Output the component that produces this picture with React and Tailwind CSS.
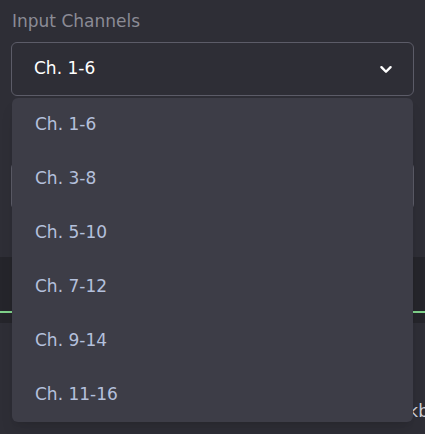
import React from "react";

const options = ["Ch. 1-6", "Ch. 3-8", "Ch. 5-10", "Ch. 7-12", "Ch. 9-14", "Ch. 11-16"];

function Chevron() {
    return (
        <svg width="22" height="22" viewBox="0 0 24 24" fill="none" stroke="#ffffff" strokeWidth="2.6" strokeLinecap="round" strokeLinejoin="round">
            <path d="M7 10l5 5 5-5" />
        </svg>
    );
}

export default function App() {
    return (
        <div
            className="relative h-[434px] w-[425px] overflow-hidden bg-[#2e2e36]"
            style={{ fontFamily: '"DejaVu Sans", "Open Sans", sans-serif' }}
        >
            {/* page behind the open menu */}
            <div className="px-[11px] pt-[10px]">
                <label className="block pl-px text-[17px] leading-[22px] text-[#8b8b95]">Input Channels</label>
                <div className="mt-[10px] flex h-[54px] items-center justify-between rounded-md border border-[#5c5c68] pl-[22px] pr-[16px]">
                    <span className="text-[17px] text-white">Ch. 1-6</span>
                    <Chevron />
                </div>
                <div className="mt-[66px] h-[48px] rounded-md border border-[#5c5c68]" />
            </div>
            <div className="mt-[47px] h-[66px] bg-[#25252b] pt-[54px]">
                <div className="h-[2px] bg-[#7fd18a]" />
            </div>
            <div className="flex justify-end pt-[76px]">
                <span className="translate-x-[4px] text-[17px] text-[#cfcfd8]">kb</span>
            </div>

            {/* open listbox */}
            <ul className="absolute left-[12px] top-[98px] w-[401px] rounded-md bg-[#3d3d47] shadow-lg">
                {options.map((opt) => (
                    <li key={opt} className="flex h-[54px] items-center pl-[23px] text-[17px] text-[#b4c0dc]">
                        {opt}
                    </li>
                ))}
            </ul>
        </div>
    );
}
